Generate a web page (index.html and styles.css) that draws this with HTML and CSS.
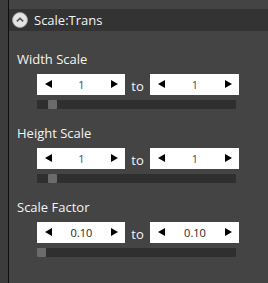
FILE: index.html
```html
<!DOCTYPE html>
<html>
<head>
<link rel="stylesheet" href="styles.css">
</head>
<body>
<div class="strip"></div>
<div class="divider"></div>
<div class="panel">
  <div class="header">
    <span class="toggle">
      <svg width="16" height="16" viewBox="0 0 16 16"><circle cx="8" cy="8" r="7.5" fill="#e4e4e4"/><circle cx="8" cy="8" r="7.5" fill="none" stroke="#9a9a9a" stroke-width="1"/><path d="M4.8 9.3 L8 6.4 L11.2 9.3" fill="none" stroke="#555" stroke-width="1.6"/></svg>
    </span>
    <span class="title">Scale:Trans</span>
  </div>

  <div class="group">
    <div class="label">Width Scale</div>
    <div class="controls">
      <div class="spin"><span class="arr left"></span><span class="val">1</span><span class="arr right"></span></div>
      <span class="to">to</span>
      <div class="spin wide"><span class="arr left"></span><span class="val">1</span><span class="arr right"></span></div>
    </div>
    <div class="track"><span class="thumb mid"></span></div>
  </div>

  <div class="group">
    <div class="label">Height Scale</div>
    <div class="controls">
      <div class="spin"><span class="arr left"></span><span class="val">1</span><span class="arr right"></span></div>
      <span class="to">to</span>
      <div class="spin wide"><span class="arr left"></span><span class="val">1</span><span class="arr right"></span></div>
    </div>
    <div class="track"><span class="thumb mid"></span></div>
  </div>

  <div class="group">
    <div class="label">Scale Factor</div>
    <div class="controls">
      <div class="spin"><span class="arr left"></span><span class="val dec">0.10</span><span class="arr right"></span></div>
      <span class="to">to</span>
      <div class="spin wide"><span class="arr left"></span><span class="val dec">0.10</span><span class="arr right"></span></div>
    </div>
    <div class="track"><span class="thumb"></span></div>
  </div>
</div>
</body>
</html>
```
FILE: styles.css
```css
html, body{
    margin:0;
    height:100%;
}

body{
    display:flex;
    background:#3e3e3e;
    font-family:"Open Sans", "Noto Sans", sans-serif;
    overflow:hidden;
}

.strip{
    width:8px;
    background:#3c3c3c;
}

.divider{
    width:1px;
    background:#0e0e0e;
}

.panel{
    flex:1;
    background:#444444;
    padding-top:9px;
}

.header{
    height:22px;
    background:#333333;
    display:flex;
    align-items:center;
    padding-left:3px;
}

.toggle{
    width:16px;
    height:16px;
    display:block;
}

.toggle svg{
    display:block;
}

.title{
    color:#f2f2f2;
    font-size:13px;
    margin-left:6px;
    line-height:22px;
}

.group{
    padding-left:8px;
    margin-top:20px;
}

.group + .group{
    margin-top:16px;
}

.label{
    color:#f4f4f4;
    font-size:13px;
    line-height:17px;
}

.controls{
    display:flex;
    align-items:center;
    margin-left:20px;
    margin-top:5px;
}

.spin{
    width:88px;
    height:21px;
    background:#ffffff;
    display:flex;
    align-items:center;
    justify-content:space-between;
    padding:0 7px 0 8px;
    box-sizing:border-box;
}

.spin.wide{
    width:89px;
}

.arr{
    width:0;
    height:0;
    border-top:4.5px solid transparent;
    border-bottom:4.5px solid transparent;
}

.arr.left{
    border-right:7px solid #000;
}

.arr.right{
    border-left:7px solid #000;
}

.val{
    color:#4a4a4a;
    font-size:11px;
    -webkit-font-smoothing:antialiased;
}

.val.dec{
    color:#1e1e1e;
}

.to{
    width:25px;
    text-align:center;
    color:#f4f4f4;
    font-size:13px;
    margin-top:4px;
}

.track{
    margin-left:20px;
    margin-top:5px;
    width:199px;
    height:9px;
    background:#2f2f2f;
    display:flex;
}

.thumb{
    width:9px;
    height:9px;
    background:#6b6b6b;
    border-radius:1px;
}

.thumb.mid{
    margin-left:11px;
}
```
